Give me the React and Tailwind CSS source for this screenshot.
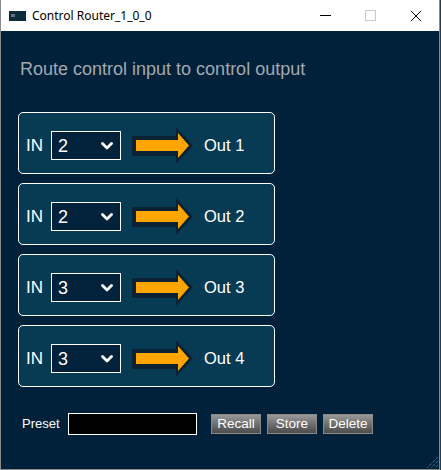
import React from "react";

const ROUTES = [
  { input: "2", out: "Out 1" },
  { input: "2", out: "Out 2" },
  { input: "3", out: "Out 3" },
  { input: "3", out: "Out 4" },
];

function Arrow() {
  return (
    <svg width="62" height="37" viewBox="0 0 62 37" className="shrink-0">
      <polygon points="0,9 44,9 44,0 61,18.5 44,37 44,29 0,29" fill="#0b2235" />
      <polygon points="4,13 46,13 46,6 57,18.5 46,31 46,24 4,24" fill="#ffa500" />
    </svg>
  );
}

function Chevron() {
  return (
    <svg width="12" height="8" viewBox="0 0 12 8">
      <polyline points="1.5,1.5 6,6 10.5,1.5" fill="none" stroke="#ffffff" strokeWidth="2.8" strokeLinecap="round" strokeLinejoin="round" />
    </svg>
  );
}

function RouteRow({ input, out }) {
  return (
    <div className="flex h-[62px] w-[257px] items-center rounded-[5px] border border-white bg-[#063b53] pl-[7px] pt-[5px]">
      <span className="w-[25px] text-[17px] leading-none text-white">IN</span>
      <div className="flex h-[29px] w-[70px] items-center justify-between border border-white bg-[#02213a] pl-[6px] pr-[7px]">
        <span className="text-[18px] leading-none text-white">{input}</span>
        <Chevron />
      </div>
      <div className="ml-[11px]">
        <Arrow />
      </div>
      <span className="ml-[10px] text-[16.5px] leading-none text-white">{out}</span>
    </div>
  );
}

function PresetButton({ children }) {
  return (
    <button type="button" className="h-[20px] w-[50px] border border-[#8a8a8a] bg-gradient-to-b from-[#9a9a9a] via-[#6f6f6f] to-[#4c4c4c] text-[13.5px] leading-none text-white">
      {children}
    </button>
  );
}

export default function App() {
  return (
    <div className="h-[470px] w-[441px] bg-[#2a3a44] font-['Liberation_Sans',Arial,sans-serif]">
      <div className="relative flex h-[470px] w-[440px] flex-col border-x border-b border-[#8a8a8a]">
        <div className="flex h-[31px] shrink-0 items-center bg-white">
          <div className="ml-[8px] flex h-[10px] w-[17px] items-center bg-[#0e2a3e] pl-[2px]">
            <div className="h-[3px] w-[4px] bg-[#5a7486]" />
          </div>
          <span className="ml-[6px] font-['Noto_Sans',sans-serif] text-[12px] text-black">Control Router_1_0_0</span>
          <div className="ml-auto flex items-center">
            <div className="h-px w-[11px] bg-black" />
            <div className="ml-[34px] h-[11px] w-[11px] border border-[#c8c8c8]" />
            <svg width="12" height="12" viewBox="0 0 12 12" className="ml-[34px] mr-[17px]">
              <path d="M1 1L11 11M11 1L1 11" stroke="#000" strokeWidth="1" />
            </svg>
          </div>
        </div>
        <div className="flex flex-1 flex-col bg-[#01213a] pl-[17px] pt-[27px]">
          <h1 className="pl-[2px] text-[18px] leading-[22px] text-[#a2a9b0]">Route control input to control output</h1>
          <div className="mt-[32px] flex flex-col gap-[9px]">
            {ROUTES.map((route) => (
              <RouteRow key={route.out} input={route.input} out={route.out} />
            ))}
          </div>
          <div className="mt-[26px] flex items-center">
            <span className="ml-[4px] w-[46px] text-[13px] text-white">Preset</span>
            <div className="h-[22px] w-[129px] border border-white bg-black" />
            <div className="ml-[14px] flex gap-[6px]">
              <PresetButton>Recall</PresetButton>
              <PresetButton>Store</PresetButton>
              <PresetButton>Delete</PresetButton>
            </div>
          </div>
        </div>
        <svg width="14" height="14" viewBox="0 0 14 14" className="absolute bottom-0 right-0">
          <path d="M13 2L2 13M13 6L6 13M13 10L10 13" stroke="#3aa0e8" strokeWidth="1" strokeDasharray="1 1" />
        </svg>
      </div>
    </div>
  );
}
